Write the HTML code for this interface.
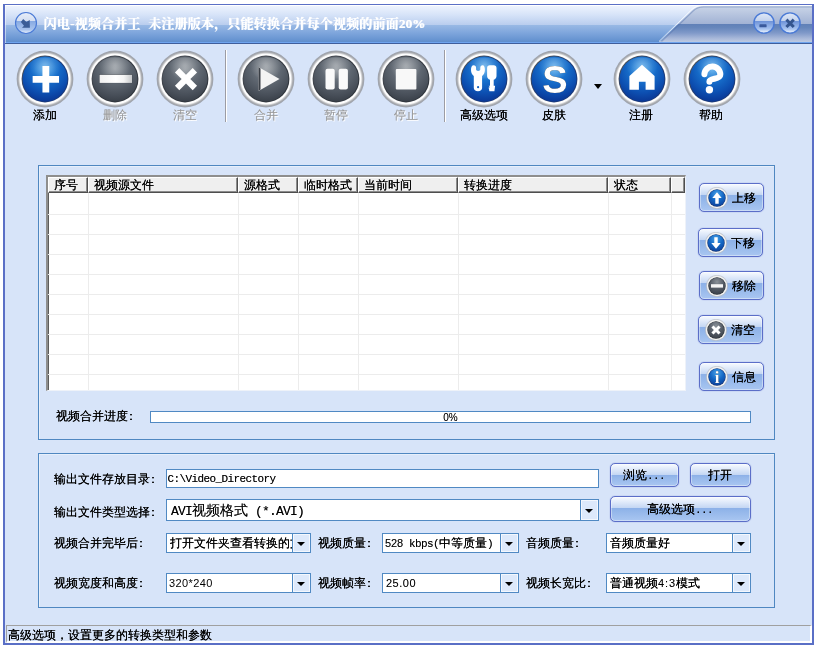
<!DOCTYPE html><html lang="zh-CN"><head><meta charset="utf-8"><title>闪电-视频合并王</title><style>
*{box-sizing:border-box;margin:0;padding:0}
html,body{width:818px;height:648px;overflow:hidden;background:#fff}
body{position:relative;font-family:"Liberation Sans","WenQuanYi Zen Hei",sans-serif;font-size:12px;color:#000;line-height:12px;text-shadow:0 0 0 #000}
#root{position:absolute;left:0;top:0;width:818px;height:648px;will-change:transform}
.abs{position:absolute}
#win{position:absolute;left:3px;top:4px;width:811px;height:641px;background:#d7e4f9;border-style:solid;border-color:#5a6fc6;border-width:1px 2px 2px 2px}
#title{position:absolute;left:5px;top:5px;width:807px;height:39px;
 background:linear-gradient(to bottom,#ffffff 0,#ffffff 1px,#edf3fe 1px,#d6e3f8 10px,#b9cdee 20px,#99b9e5 20px,#7ea5dc 28px,#6391cf 36px,#5f8dcb 37px,#6ea4ef 37px,#6ea4ef 38px,#3b5b99 38px,#41619f 39px)}
#title .lw{position:absolute;left:0;top:0;width:1px;height:38px;background:rgba(255,255,255,.5)}
.ttext{text-shadow:0.6px 0 0 rgba(255,255,255,.85);position:absolute;left:45px;top:16px;font:bold 13px/15px "Liberation Serif","Noto Serif CJK SC",serif;color:#fff;white-space:nowrap;letter-spacing:0}
.tlabel{position:absolute;top:109px;width:80px;text-align:center;font-size:12px;line-height:12px;white-space:nowrap}
.tlabel.dis{color:#9a9a9a;text-shadow:0 0 0 rgba(154,154,154,.4),1px 1px 0 #fff}
.sep{position:absolute;top:50px;width:2px;height:72px;border-left:1px solid #9c9ca4;border-right:1px solid #fff}
.grp{position:absolute;border:1px solid #4f87c1;box-shadow:inset 1px 1px 0 rgba(255,255,255,.4)}
.cl{margin-left:-3px}
.m{font:11px/12px "Liberation Mono",monospace;letter-spacing:-0.6px;text-shadow:0 0 0 rgba(0,0,0,.55)}
.n{font:11px/12px "Liberation Sans",sans-serif;text-shadow:0 0 0 rgba(0,0,0,.35)}
.lbl{position:absolute;white-space:nowrap;font-size:12px;line-height:12px}
.inp{position:absolute;background:#fff;border:1px solid #5089c3;white-space:nowrap;overflow:hidden}
.dd{position:absolute;right:0;top:0;bottom:0;width:18px;background:#dde9fb;border-left:1px solid #5089c3;box-shadow:inset 0 0 0 1px #f4f8fe}
.dd:after{content:"";position:absolute;left:3.5px;top:50%;margin-top:-1px;border-left:4px solid transparent;border-right:4px solid transparent;border-top:4px solid #000;width:0;height:0}
.btn{position:absolute;border:1px solid #5b6ec8;border-radius:5px;
 background:linear-gradient(to bottom,#f8fbff 0,#e0eafa 5px,#c3d6f3 11px,#8db1e8 11.5px,#94b7ea 60%,#a9c6f1 100%);
 box-shadow:inset 0 0 0 1px rgba(255,255,255,.4),0 0 1px #5b6ec8}
.btn .t{position:absolute;white-space:nowrap;font-size:12px;line-height:12px}
#list{position:absolute;left:46px;top:175px;width:640px;height:216px;background:#fff;border-style:solid;border-width:2px 1px 1px 2px;border-color:#8e8e8e #eef2f9 #eef2f9 #8e8e8e;box-shadow:inset 1px 1px 0 #5c5c5c}
.hc{position:absolute;top:0;height:16px;background:#efefef;border-style:solid;border-width:1px 1px 1px 1px;border-color:#fff #4e4e4e #4e4e4e #fff;box-shadow:inset -1px -1px 0 #8c8c8c;font-size:12px;line-height:12px;padding:1px 0 0 5px;white-space:nowrap;overflow:visible}
.vl{position:absolute;top:16px;bottom:0;width:1px;background:#ececec}
.hl{position:absolute;left:0;right:0;height:1px;background:#ececec}
#status{position:absolute;left:6px;top:625px;width:806px;height:18px;border-style:solid;border-width:1px 2px 2px 1px;border-color:#a0a0a0 #fff #fff #a0a0a0;font-size:12px;line-height:12px;padding:3px 0 0 1px;white-space:nowrap}
</style></head><body><div id="root">
<div id="win"></div>
<div id="title"><div class="lw"></div>
<svg class="abs" style="left:650px;top:0" width="157" height="39" viewBox="0 0 157 39"><defs><linearGradient id="tg" x1="0" y1="1" x2="0" y2="37" gradientUnits="userSpaceOnUse"><stop offset="0" stop-color="#cad5e8"/><stop offset="0.499" stop-color="#a1b2d4"/><stop offset="0.5" stop-color="#6080b7"/><stop offset="0.6" stop-color="#6686bb"/><stop offset="0.75" stop-color="#8099c9"/><stop offset="0.9" stop-color="#a8b8d9"/><stop offset="1" stop-color="#bdcae2"/></linearGradient></defs><path d="M4,37 L6.500,35.500 L37,5.500 C40.500,2.200 43.500,1 48.500,1 L157,1 L157,37Z" fill="url(#tg)"/><path d="M6.500,36.500 L37.800,6.300 C41,3.200 43.500,2 48.500,2 L157,2" fill="none" stroke="#4f6ea9" stroke-opacity="0.42" stroke-width="1.1"/><path d="M4,36.500 L36.400,4.900 C40,1.500 43,0.500 48.500,0.500 L157,0.500" fill="none" stroke="#ffffff" stroke-opacity="0.8" stroke-width="0.9"/></svg>
<svg class="abs" style="left:8.050px;top:4.800px" width="26" height="26" viewBox="-13 -13 26 26"><defs><linearGradient id="ti" x1="0" y1="-11" x2="0" y2="11" gradientUnits="userSpaceOnUse"><stop offset="0" stop-color="#e9eff9"/><stop offset="0.39" stop-color="#d5dff2"/><stop offset="0.41" stop-color="#86a9e2"/><stop offset="0.8" stop-color="#a9c4ee"/><stop offset="1" stop-color="#f4f8fe"/></linearGradient></defs><circle r="10.500" fill="url(#ti)" stroke="#4a7ad6" stroke-width="1.15"/><path d="M-5.100,-1 L-2.800,-3.900 L0.400,-1 L3.700,-2.900 L3.900,4.700 L-4,4.700 L-2,2.700Z" fill="#3b5d97"/></svg>
<div class="ttext abs" style="left:38.500px;top:11px;word-spacing:4px;letter-spacing:0.2px">闪电-视频合并王 未注册版本，只能转换合并每个视频的前面20%</div>
<svg class="abs" style="left:746px;top:4.700px" width="26" height="26" viewBox="-13 -13 26 26"><defs><linearGradient id="c759" x1="0" y1="-10" x2="0" y2="10" gradientUnits="userSpaceOnUse"><stop offset="0" stop-color="#dfe8f7"/><stop offset="0.40" stop-color="#c3d2ed"/><stop offset="0.42" stop-color="#6f94d9"/><stop offset="0.8" stop-color="#a6c2ef"/><stop offset="1" stop-color="#f4f8fe"/></linearGradient></defs><circle r="10.1" fill="url(#c759)" stroke="#4a7ad6" stroke-width="1.4"/><rect x="-4.6" y="1.3" width="7.2" height="3" rx="0.6" fill="#3a5a9c"/></svg>
<svg class="abs" style="left:772.1px;top:4.700px" width="26" height="26" viewBox="-13 -13 26 26"><defs><linearGradient id="c785" x1="0" y1="-10" x2="0" y2="10" gradientUnits="userSpaceOnUse"><stop offset="0" stop-color="#dfe8f7"/><stop offset="0.40" stop-color="#c3d2ed"/><stop offset="0.42" stop-color="#6f94d9"/><stop offset="0.8" stop-color="#a6c2ef"/><stop offset="1" stop-color="#f4f8fe"/></linearGradient></defs><circle r="10.1" fill="url(#c785)" stroke="#4a7ad6" stroke-width="1.4"/><path d="M-1.5,-5.2 h3 v3.7 h3.7 v3 h-3.7 v3.7 h-3 v-3.7 h-3.7 v-3 h3.700z" fill="#34558f" transform="translate(0.1,0.3) rotate(45)"/></svg>
</div>
<svg class="abs" style="left:15.3px;top:49px" width="60" height="60" viewBox="-30 -30 60 60"><defs><radialGradient id="g45" cx="0" cy="-10" r="38" gradientUnits="userSpaceOnUse"><stop offset="0" stop-color="#48a4ea"/><stop offset="0.3" stop-color="#1872ce"/><stop offset="0.62" stop-color="#0d50b2"/><stop offset="0.85" stop-color="#0a3896"/><stop offset="1" stop-color="#08287c"/></radialGradient><radialGradient id="g45r" cx="0" cy="0" r="28.5" gradientUnits="userSpaceOnUse"><stop offset="0.78" stop-color="#f8f8f8"/><stop offset="0.87" stop-color="#ffffff"/><stop offset="0.94" stop-color="#aaacb0"/><stop offset="1" stop-color="#7c7e84" stop-opacity="0.6"/></radialGradient><radialGradient id="g45h" cx="0" cy="-14" r="16" gradientUnits="userSpaceOnUse"><stop offset="0" stop-color="#fff" stop-opacity="0.30"/><stop offset="1" stop-color="#fff" stop-opacity="0"/></radialGradient><linearGradient id="g45e" x1="-16" y1="-16" x2="16" y2="16" gradientUnits="userSpaceOnUse"><stop offset="0" stop-color="#4a4e56"/><stop offset="0.5" stop-color="#1c3a78"/><stop offset="1" stop-color="#1c3a78"/></linearGradient></defs><circle r="28.4" fill="url(#g45r)"/><circle r="23.4" fill="url(#g45e)"/><circle r="22.4" fill="url(#g45)"/><ellipse cx="0" cy="-11" rx="17" ry="10.500" fill="url(#g45h)"/><path d="M-3.4,-13.2 h6.8 v9.8 h9.8 v6.8 h-9.8 v9.8 h-6.8 v-9.8 h-9.8 v-6.8 h9.800z" fill="#fff" transform="translate(0.85,0.3)"/></svg>
<div class="tlabel" style="left:5px">添加</div>
<svg class="abs" style="left:85.2px;top:49px" width="60" height="60" viewBox="-30 -30 60 60"><defs><radialGradient id="g115" cx="0" cy="-10" r="38" gradientUnits="userSpaceOnUse"><stop offset="0" stop-color="#8a9198"/><stop offset="0.35" stop-color="#626a74"/><stop offset="0.7" stop-color="#474e58"/><stop offset="1" stop-color="#2e343c"/></radialGradient><radialGradient id="g115r" cx="0" cy="0" r="28.5" gradientUnits="userSpaceOnUse"><stop offset="0.78" stop-color="#f8f8f8"/><stop offset="0.87" stop-color="#ffffff"/><stop offset="0.94" stop-color="#aaacb0"/><stop offset="1" stop-color="#7c7e84" stop-opacity="0.6"/></radialGradient><radialGradient id="g115h" cx="0" cy="-14" r="16" gradientUnits="userSpaceOnUse"><stop offset="0" stop-color="#fff" stop-opacity="0.30"/><stop offset="1" stop-color="#fff" stop-opacity="0"/></radialGradient><linearGradient id="g115e" x1="-16" y1="-16" x2="16" y2="16" gradientUnits="userSpaceOnUse"><stop offset="0" stop-color="#4a4e56"/><stop offset="0.5" stop-color="#30353c"/><stop offset="1" stop-color="#30353c"/></linearGradient></defs><circle r="28.4" fill="url(#g115r)"/><circle r="23.4" fill="url(#g115e)"/><circle r="22.4" fill="url(#g115)"/><ellipse cx="0" cy="-11" rx="17" ry="10.500" fill="url(#g115h)"/><defs><linearGradient id="mg" x1="0" x2="1"><stop offset="0" stop-color="#f0f0f0"/><stop offset="0.5" stop-color="#ffffff"/><stop offset="0.75" stop-color="#f4f4f4"/><stop offset="1" stop-color="#c6c8ca"/></linearGradient></defs><rect x="-15.8" y="-4.9" width="33" height="9" fill="#2c3138" fill-opacity="0.55"/><rect x="-15.4" y="-4.2" width="32.4" height="8.1" fill="url(#mg)"/></svg>
<div class="tlabel dis" style="left:75px">删除</div>
<svg class="abs" style="left:155.2px;top:49px" width="60" height="60" viewBox="-30 -30 60 60"><defs><radialGradient id="g185" cx="0" cy="-10" r="38" gradientUnits="userSpaceOnUse"><stop offset="0" stop-color="#8a9198"/><stop offset="0.35" stop-color="#626a74"/><stop offset="0.7" stop-color="#474e58"/><stop offset="1" stop-color="#2e343c"/></radialGradient><radialGradient id="g185r" cx="0" cy="0" r="28.5" gradientUnits="userSpaceOnUse"><stop offset="0.78" stop-color="#f8f8f8"/><stop offset="0.87" stop-color="#ffffff"/><stop offset="0.94" stop-color="#aaacb0"/><stop offset="1" stop-color="#7c7e84" stop-opacity="0.6"/></radialGradient><radialGradient id="g185h" cx="0" cy="-14" r="16" gradientUnits="userSpaceOnUse"><stop offset="0" stop-color="#fff" stop-opacity="0.30"/><stop offset="1" stop-color="#fff" stop-opacity="0"/></radialGradient><linearGradient id="g185e" x1="-16" y1="-16" x2="16" y2="16" gradientUnits="userSpaceOnUse"><stop offset="0" stop-color="#4a4e56"/><stop offset="0.5" stop-color="#30353c"/><stop offset="1" stop-color="#30353c"/></linearGradient></defs><circle r="28.4" fill="url(#g185r)"/><circle r="23.4" fill="url(#g185e)"/><circle r="22.4" fill="url(#g185)"/><ellipse cx="0" cy="-11" rx="17" ry="10.500" fill="url(#g185h)"/><path d="M-3.3,-13.500 h6.6 v10.200 h10.200 v6.600 h-10.200 v10.200 h-6.600 v-10.200 h-10.200 v-6.600 h10.200z" fill="#fff" transform="translate(1,0.1) rotate(45) scale(0.93)"/></svg>
<div class="tlabel dis" style="left:145px">清空</div>
<svg class="abs" style="left:236.2px;top:49px" width="60" height="60" viewBox="-30 -30 60 60"><defs><radialGradient id="g266" cx="0" cy="-10" r="38" gradientUnits="userSpaceOnUse"><stop offset="0" stop-color="#8a9198"/><stop offset="0.35" stop-color="#626a74"/><stop offset="0.7" stop-color="#474e58"/><stop offset="1" stop-color="#2e343c"/></radialGradient><radialGradient id="g266r" cx="0" cy="0" r="28.5" gradientUnits="userSpaceOnUse"><stop offset="0.78" stop-color="#f8f8f8"/><stop offset="0.87" stop-color="#ffffff"/><stop offset="0.94" stop-color="#aaacb0"/><stop offset="1" stop-color="#7c7e84" stop-opacity="0.6"/></radialGradient><radialGradient id="g266h" cx="0" cy="-14" r="16" gradientUnits="userSpaceOnUse"><stop offset="0" stop-color="#fff" stop-opacity="0.30"/><stop offset="1" stop-color="#fff" stop-opacity="0"/></radialGradient><linearGradient id="g266e" x1="-16" y1="-16" x2="16" y2="16" gradientUnits="userSpaceOnUse"><stop offset="0" stop-color="#4a4e56"/><stop offset="0.5" stop-color="#30353c"/><stop offset="1" stop-color="#30353c"/></linearGradient></defs><circle r="28.4" fill="url(#g266r)"/><circle r="23.4" fill="url(#g266e)"/><circle r="22.4" fill="url(#g266)"/><ellipse cx="0" cy="-11" rx="17" ry="10.500" fill="url(#g266h)"/><path d="M-7.5,-12 L13.5,0 L-7.5,12Z" fill="#f4f4f4"/><path d="M-7.5,-12 L-5.5,-10.5 L-5.5,10.5 L-7.5,12Z" fill="#3a3f46"/></svg>
<div class="tlabel dis" style="left:226px">合并</div>
<svg class="abs" style="left:306.1px;top:49px" width="60" height="60" viewBox="-30 -30 60 60"><defs><radialGradient id="g336" cx="0" cy="-10" r="38" gradientUnits="userSpaceOnUse"><stop offset="0" stop-color="#8a9198"/><stop offset="0.35" stop-color="#626a74"/><stop offset="0.7" stop-color="#474e58"/><stop offset="1" stop-color="#2e343c"/></radialGradient><radialGradient id="g336r" cx="0" cy="0" r="28.5" gradientUnits="userSpaceOnUse"><stop offset="0.78" stop-color="#f8f8f8"/><stop offset="0.87" stop-color="#ffffff"/><stop offset="0.94" stop-color="#aaacb0"/><stop offset="1" stop-color="#7c7e84" stop-opacity="0.6"/></radialGradient><radialGradient id="g336h" cx="0" cy="-14" r="16" gradientUnits="userSpaceOnUse"><stop offset="0" stop-color="#fff" stop-opacity="0.30"/><stop offset="1" stop-color="#fff" stop-opacity="0"/></radialGradient><linearGradient id="g336e" x1="-16" y1="-16" x2="16" y2="16" gradientUnits="userSpaceOnUse"><stop offset="0" stop-color="#4a4e56"/><stop offset="0.5" stop-color="#30353c"/><stop offset="1" stop-color="#30353c"/></linearGradient></defs><circle r="28.4" fill="url(#g336r)"/><circle r="23.4" fill="url(#g336e)"/><circle r="22.4" fill="url(#g336)"/><ellipse cx="0" cy="-11" rx="17" ry="10.500" fill="url(#g336h)"/><rect x="-10.5" y="-10.3" width="9.2" height="20.8" rx="2" fill="#fafafa"/><rect x="2.7" y="-10.3" width="9.2" height="20.8" rx="2" fill="#fafafa"/></svg>
<div class="tlabel dis" style="left:296px">暂停</div>
<svg class="abs" style="left:376.2px;top:49px" width="60" height="60" viewBox="-30 -30 60 60"><defs><radialGradient id="g406" cx="0" cy="-10" r="38" gradientUnits="userSpaceOnUse"><stop offset="0" stop-color="#8a9198"/><stop offset="0.35" stop-color="#626a74"/><stop offset="0.7" stop-color="#474e58"/><stop offset="1" stop-color="#2e343c"/></radialGradient><radialGradient id="g406r" cx="0" cy="0" r="28.5" gradientUnits="userSpaceOnUse"><stop offset="0.78" stop-color="#f8f8f8"/><stop offset="0.87" stop-color="#ffffff"/><stop offset="0.94" stop-color="#aaacb0"/><stop offset="1" stop-color="#7c7e84" stop-opacity="0.6"/></radialGradient><radialGradient id="g406h" cx="0" cy="-14" r="16" gradientUnits="userSpaceOnUse"><stop offset="0" stop-color="#fff" stop-opacity="0.30"/><stop offset="1" stop-color="#fff" stop-opacity="0"/></radialGradient><linearGradient id="g406e" x1="-16" y1="-16" x2="16" y2="16" gradientUnits="userSpaceOnUse"><stop offset="0" stop-color="#4a4e56"/><stop offset="0.5" stop-color="#30353c"/><stop offset="1" stop-color="#30353c"/></linearGradient></defs><circle r="28.4" fill="url(#g406r)"/><circle r="23.4" fill="url(#g406e)"/><circle r="22.4" fill="url(#g406)"/><ellipse cx="0" cy="-11" rx="17" ry="10.500" fill="url(#g406h)"/><rect x="-10.2" y="-10" width="20.6" height="20.6" rx="1" fill="#f8f8f8"/></svg>
<div class="tlabel dis" style="left:366px">停止</div>
<svg class="abs" style="left:454.3px;top:49px" width="60" height="60" viewBox="-30 -30 60 60"><defs><radialGradient id="g484" cx="0" cy="-10" r="38" gradientUnits="userSpaceOnUse"><stop offset="0" stop-color="#48a4ea"/><stop offset="0.3" stop-color="#1872ce"/><stop offset="0.62" stop-color="#0d50b2"/><stop offset="0.85" stop-color="#0a3896"/><stop offset="1" stop-color="#08287c"/></radialGradient><radialGradient id="g484r" cx="0" cy="0" r="28.5" gradientUnits="userSpaceOnUse"><stop offset="0.78" stop-color="#f8f8f8"/><stop offset="0.87" stop-color="#ffffff"/><stop offset="0.94" stop-color="#aaacb0"/><stop offset="1" stop-color="#7c7e84" stop-opacity="0.6"/></radialGradient><radialGradient id="g484h" cx="0" cy="-14" r="16" gradientUnits="userSpaceOnUse"><stop offset="0" stop-color="#fff" stop-opacity="0.30"/><stop offset="1" stop-color="#fff" stop-opacity="0"/></radialGradient><linearGradient id="g484e" x1="-16" y1="-16" x2="16" y2="16" gradientUnits="userSpaceOnUse"><stop offset="0" stop-color="#4a4e56"/><stop offset="0.5" stop-color="#1c3a78"/><stop offset="1" stop-color="#1c3a78"/></linearGradient></defs><circle r="28.4" fill="url(#g484r)"/><circle r="23.4" fill="url(#g484e)"/><circle r="22.4" fill="url(#g484)"/><ellipse cx="0" cy="-11" rx="17" ry="10.500" fill="url(#g484h)"/><g fill="#fff"><path d="M-13,-9 C-13,-12 -12,-13.700 -10.400,-13.700 C-8.800,-13.700 -7.900,-12.600 -7.900,-11 L-7.900,-9.800 C-7.900,-8.600 -7,-8.100 -5.800,-8.100 C-4.600,-8.100 -3.700,-8.600 -3.700,-9.800 L-3.700,-11 C-3.700,-12.600 -2.800,-13.700 -1.400,-13.700 C0.200,-13.700 0.900,-12 0.900,-9 C0.900,-6 -0.500,-4.200 -1.900,-3 L-1.900,9 C-1.900,11 -3.600,12.200 -6,12.200 C-8.500,12.200 -10.200,11 -10.200,9 L-10.200,-3 C-11.600,-4.200 -13,-6 -13,-9 Z"/><path d="M3.100,-11 C3.100,-12.800 4.200,-13.700 5.800,-13.700 L9.800,-13.700 C11.400,-13.700 12.500,-12.800 12.500,-11 L12.500,-3 C12.500,-1 11.500,0 9.700,0.800 L9.700,6.700 L11.100,6.700 L10.400,12.200 L5.400,12.200 L4.600,8.600 L6,8.200 L4.600,6.700 L6,6.700 L6,0.800 C4.100,0 3.100,-1 3.100,-3 Z"/></g><circle cx="-5.900" cy="8.200" r="1.100" fill="#1560bd"/></svg>
<div class="tlabel" style="left:444px">高级选项</div>
<svg class="abs" style="left:524.2px;top:49px" width="60" height="60" viewBox="-30 -30 60 60"><defs><radialGradient id="g554" cx="0" cy="-10" r="38" gradientUnits="userSpaceOnUse"><stop offset="0" stop-color="#48a4ea"/><stop offset="0.3" stop-color="#1872ce"/><stop offset="0.62" stop-color="#0d50b2"/><stop offset="0.85" stop-color="#0a3896"/><stop offset="1" stop-color="#08287c"/></radialGradient><radialGradient id="g554r" cx="0" cy="0" r="28.5" gradientUnits="userSpaceOnUse"><stop offset="0.78" stop-color="#f8f8f8"/><stop offset="0.87" stop-color="#ffffff"/><stop offset="0.94" stop-color="#aaacb0"/><stop offset="1" stop-color="#7c7e84" stop-opacity="0.6"/></radialGradient><radialGradient id="g554h" cx="0" cy="-14" r="16" gradientUnits="userSpaceOnUse"><stop offset="0" stop-color="#fff" stop-opacity="0.30"/><stop offset="1" stop-color="#fff" stop-opacity="0"/></radialGradient><linearGradient id="g554e" x1="-16" y1="-16" x2="16" y2="16" gradientUnits="userSpaceOnUse"><stop offset="0" stop-color="#4a4e56"/><stop offset="0.5" stop-color="#1c3a78"/><stop offset="1" stop-color="#1c3a78"/></linearGradient></defs><circle r="28.4" fill="url(#g554r)"/><circle r="23.4" fill="url(#g554e)"/><circle r="22.4" fill="url(#g554)"/><ellipse cx="0" cy="-11" rx="17" ry="10.500" fill="url(#g554h)"/><text x="0.9" y="14.400" text-anchor="middle" font-family="Liberation Sans,sans-serif" font-weight="bold" font-size="38" fill="#fff">S</text></svg>
<div class="tlabel" style="left:514px">皮肤</div>
<svg class="abs" style="left:611.5px;top:49px" width="60" height="60" viewBox="-30 -30 60 60"><defs><radialGradient id="g641" cx="0" cy="-10" r="38" gradientUnits="userSpaceOnUse"><stop offset="0" stop-color="#48a4ea"/><stop offset="0.3" stop-color="#1872ce"/><stop offset="0.62" stop-color="#0d50b2"/><stop offset="0.85" stop-color="#0a3896"/><stop offset="1" stop-color="#08287c"/></radialGradient><radialGradient id="g641r" cx="0" cy="0" r="28.5" gradientUnits="userSpaceOnUse"><stop offset="0.78" stop-color="#f8f8f8"/><stop offset="0.87" stop-color="#ffffff"/><stop offset="0.94" stop-color="#aaacb0"/><stop offset="1" stop-color="#7c7e84" stop-opacity="0.6"/></radialGradient><radialGradient id="g641h" cx="0" cy="-14" r="16" gradientUnits="userSpaceOnUse"><stop offset="0" stop-color="#fff" stop-opacity="0.30"/><stop offset="1" stop-color="#fff" stop-opacity="0"/></radialGradient><linearGradient id="g641e" x1="-16" y1="-16" x2="16" y2="16" gradientUnits="userSpaceOnUse"><stop offset="0" stop-color="#4a4e56"/><stop offset="0.5" stop-color="#1c3a78"/><stop offset="1" stop-color="#1c3a78"/></linearGradient></defs><circle r="28.4" fill="url(#g641r)"/><circle r="23.4" fill="url(#g641e)"/><circle r="22.4" fill="url(#g641)"/><ellipse cx="0" cy="-11" rx="17" ry="10.500" fill="url(#g641h)"/><path d="M0,-14.200 L12.600,-3.100 L12.600,10.800 L3.600,10.800 L3.600,2.700 L-3.100,2.700 L-3.100,10.800 L-12.600,10.800 L-12.600,-3.100 Z" fill="#fff"/></svg>
<div class="tlabel" style="left:601px">注册</div>
<svg class="abs" style="left:681.5px;top:49px" width="60" height="60" viewBox="-30 -30 60 60"><defs><radialGradient id="g711" cx="0" cy="-10" r="38" gradientUnits="userSpaceOnUse"><stop offset="0" stop-color="#48a4ea"/><stop offset="0.3" stop-color="#1872ce"/><stop offset="0.62" stop-color="#0d50b2"/><stop offset="0.85" stop-color="#0a3896"/><stop offset="1" stop-color="#08287c"/></radialGradient><radialGradient id="g711r" cx="0" cy="0" r="28.5" gradientUnits="userSpaceOnUse"><stop offset="0.78" stop-color="#f8f8f8"/><stop offset="0.87" stop-color="#ffffff"/><stop offset="0.94" stop-color="#aaacb0"/><stop offset="1" stop-color="#7c7e84" stop-opacity="0.6"/></radialGradient><radialGradient id="g711h" cx="0" cy="-14" r="16" gradientUnits="userSpaceOnUse"><stop offset="0" stop-color="#fff" stop-opacity="0.30"/><stop offset="1" stop-color="#fff" stop-opacity="0"/></radialGradient><linearGradient id="g711e" x1="-16" y1="-16" x2="16" y2="16" gradientUnits="userSpaceOnUse"><stop offset="0" stop-color="#4a4e56"/><stop offset="0.5" stop-color="#1c3a78"/><stop offset="1" stop-color="#1c3a78"/></linearGradient></defs><circle r="28.4" fill="url(#g711r)"/><circle r="23.4" fill="url(#g711e)"/><circle r="22.4" fill="url(#g711)"/><ellipse cx="0" cy="-11" rx="17" ry="10.500" fill="url(#g711h)"/><path d="M-7.600,-4.800 A7.950,7.950 0 0 1 8.300,-4.150 C8.300,1.200 -2.600,-1.600 -2.600,2.700" fill="none" stroke="#fff" stroke-width="6" stroke-linecap="round"/><circle cx="-2.600" cy="10.800" r="3.700" fill="#fff"/></svg>
<div class="tlabel" style="left:671px">帮助</div>
<div class="sep" style="left:225px"></div><div class="sep" style="left:444px"></div>
<div class="abs" style="left:593.8px;top:83.5px;width:0;height:0;border-left:4.5px solid transparent;border-right:4.5px solid transparent;border-top:5px solid #000"></div>
<div class="grp" style="left:38px;top:165px;width:737px;height:275px"></div>
<div id="list">
<div class="hc" style="left:0px;width:40px">序号</div>
<div class="hc" style="left:40px;width:150px">视频源文件</div>
<div class="hc" style="left:190px;width:60px">源格式</div>
<div class="hc" style="left:250px;width:60px">临时格式</div>
<div class="hc" style="left:310px;width:100px">当前时间</div>
<div class="hc" style="left:410px;width:150px">转换进度</div>
<div class="hc" style="left:560px;width:63px">状态</div>
<div class="hc" style="left:623px;width:14px"></div>
<div class="vl" style="left:40px"></div>
<div class="vl" style="left:190px"></div>
<div class="vl" style="left:250px"></div>
<div class="vl" style="left:310px"></div>
<div class="vl" style="left:410px"></div>
<div class="vl" style="left:560px"></div>
<div class="vl" style="left:623px"></div>
<div class="hl" style="top:37px"></div>
<div class="hl" style="top:57px"></div>
<div class="hl" style="top:77px"></div>
<div class="hl" style="top:97px"></div>
<div class="hl" style="top:117px"></div>
<div class="hl" style="top:137px"></div>
<div class="hl" style="top:157px"></div>
<div class="hl" style="top:177px"></div>
<div class="hl" style="top:197px"></div>
</div>
<div class="btn" style="left:699px;top:183px;width:65px;height:29px"><div class="t" style="left:32px;top:8px">上移</div></div>
<svg class="abs" style="left:705.2px;top:186.2px" width="24" height="24" viewBox="-12 -12 24 24"><defs><radialGradient id="s198" cx="0" cy="-4" r="15" gradientUnits="userSpaceOnUse"><stop offset="0" stop-color="#48a2e8"/><stop offset="0.45" stop-color="#1467c4"/><stop offset="1" stop-color="#0a3088"/></radialGradient></defs><circle r="11" fill="#b9bcc2" fill-opacity="0.75"/><circle r="10.2" fill="#f4f4f2"/><circle r="8.7" fill="#1c3a78"/><circle r="8.2" fill="url(#s198)"/><path d="M0,-5.800 L4.700,0 L1.700,0 L1.700,5.800 L-1.700,5.800 L-1.700,0 L-4.700,0Z" fill="#fff"/></svg>
<div class="btn" style="left:698px;top:228px;width:65px;height:29px"><div class="t" style="left:32px;top:8px">下移</div></div>
<svg class="abs" style="left:704.2px;top:231.2px" width="24" height="24" viewBox="-12 -12 24 24"><defs><radialGradient id="s243" cx="0" cy="-4" r="15" gradientUnits="userSpaceOnUse"><stop offset="0" stop-color="#48a2e8"/><stop offset="0.45" stop-color="#1467c4"/><stop offset="1" stop-color="#0a3088"/></radialGradient></defs><circle r="11" fill="#b9bcc2" fill-opacity="0.75"/><circle r="10.2" fill="#f4f4f2"/><circle r="8.7" fill="#1c3a78"/><circle r="8.2" fill="url(#s243)"/><path d="M0,5.800 L4.700,0 L1.700,0 L1.700,-5.800 L-1.700,-5.800 L-1.700,0 L-4.700,0Z" fill="#fff"/></svg>
<div class="btn" style="left:699px;top:271px;width:65px;height:29px"><div class="t" style="left:32px;top:8px">移除</div></div>
<svg class="abs" style="left:705.2px;top:274.2px" width="24" height="24" viewBox="-12 -12 24 24"><defs><radialGradient id="s286" cx="0" cy="-4" r="15" gradientUnits="userSpaceOnUse"><stop offset="0" stop-color="#8a9198"/><stop offset="0.45" stop-color="#555c66"/><stop offset="1" stop-color="#2e343c"/></radialGradient></defs><circle r="11" fill="#b9bcc2" fill-opacity="0.75"/><circle r="10.2" fill="#f4f4f2"/><circle r="8.7" fill="#30353c"/><circle r="8.2" fill="url(#s286)"/><rect x="-6" y="-1.8" width="12" height="3.4" fill="#f4f4f4"/></svg>
<div class="btn" style="left:698px;top:315px;width:65px;height:29px"><div class="t" style="left:32px;top:8px">清空</div></div>
<svg class="abs" style="left:704.2px;top:318.2px" width="24" height="24" viewBox="-12 -12 24 24"><defs><radialGradient id="s330" cx="0" cy="-4" r="15" gradientUnits="userSpaceOnUse"><stop offset="0" stop-color="#8a9198"/><stop offset="0.45" stop-color="#555c66"/><stop offset="1" stop-color="#2e343c"/></radialGradient></defs><circle r="11" fill="#b9bcc2" fill-opacity="0.75"/><circle r="10.2" fill="#f4f4f2"/><circle r="8.7" fill="#30353c"/><circle r="8.2" fill="url(#s330)"/><path d="M-1.5,-5 h3 v3.5 h3.5 v3 h-3.5 v3.5 h-3 v-3.5 h-3.5 v-3 h3.5z" fill="#fff" transform="rotate(45)"/></svg>
<div class="btn" style="left:699px;top:362px;width:65px;height:29px"><div class="t" style="left:32px;top:8px">信息</div></div>
<svg class="abs" style="left:705.2px;top:365.2px" width="24" height="24" viewBox="-12 -12 24 24"><defs><radialGradient id="s377" cx="0" cy="-4" r="15" gradientUnits="userSpaceOnUse"><stop offset="0" stop-color="#48a2e8"/><stop offset="0.45" stop-color="#1467c4"/><stop offset="1" stop-color="#0a3088"/></radialGradient></defs><circle r="11" fill="#b9bcc2" fill-opacity="0.75"/><circle r="10.2" fill="#f4f4f2"/><circle r="8.7" fill="#1c3a78"/><circle r="8.2" fill="url(#s377)"/><text x="0" y="6" text-anchor="middle" font-family="Liberation Serif,serif" font-weight="bold" font-size="17" fill="#fff">i</text></svg>
<div class="lbl" style="left:56px;top:410px">视频合并进度<span class="cl">：</span></div>
<div class="inp" style="left:150px;top:411px;width:601px;height:12px"><div class="abs" style="left:0;right:0;top:-1px;text-align:center" ><span class="n" style="font-size:10px">0%</span></div></div>
<div class="grp" style="left:38px;top:453px;width:737px;height:155px"></div>
<div class="lbl" style="left:54px;top:473px">输出文件存放目录<span class="cl">：</span></div>
<div class="inp" style="left:166px;top:469px;width:433px;height:19px"><span class="abs m" style="left:0.500px;top:3px">C:\Video_Directory</span></div>
<div class="lbl" style="left:54px;top:506px">输出文件类型选择<span class="cl">：</span></div>
<div class="inp" style="left:166px;top:499px;width:433px;height:22px"><span class="abs" style="left:4px;top:3px;font-size:14px;line-height:15px;text-shadow:0 0 0 rgba(0,0,0,.5)"><span class="m" style="font-size:13px;letter-spacing:-0.8px;line-height:15px">AVI</span>视频格式<span class="m" style="font-size:13px;letter-spacing:-0.8px;line-height:15px"> (*.AVI)</span></span><div class="dd"></div></div>
<div class="btn" style="left:610px;top:463px;width:69px;height:24px"><div class="t" style="left:12px;top:5px">浏览<span class="m">...</span></div></div>
<div class="btn" style="left:690px;top:463px;width:61px;height:24px"><div class="t" style="left:17px;top:5px">打开</div></div>
<div class="btn" style="left:610px;top:496px;width:141px;height:26px"><div class="t" style="left:36px;top:6px">高级选项<span class="m">...</span></div></div>
<div class="lbl" style="left:54px;top:537px">视频合并完毕后<span class="cl">：</span></div>
<div class="inp" style="left:166px;top:533px;width:145px;height:20px"><span class="abs" style="left:3px;top:3px">打开文件夹查看转换的文件</span><div class="dd"></div></div>
<div class="lbl" style="left:318px;top:537px">视频质量<span class="cl">：</span></div>
<div class="inp" style="left:382px;top:533px;width:137px;height:20px"><span class="abs" style="left:2px;top:3px"><span class="n" style="letter-spacing:-0.1px">528</span><span class="m"> kbps(</span>中等质量<span class="m">)</span></span><div class="dd"></div></div>
<div class="lbl" style="left:526px;top:537px">音频质量<span class="cl">：</span></div>
<div class="inp" style="left:606px;top:533px;width:145px;height:20px"><span class="abs" style="left:3px;top:3px">音频质量好</span><div class="dd"></div></div>
<div class="lbl" style="left:54px;top:577px">视频宽度和高度<span class="cl">：</span></div>
<div class="inp" style="left:166px;top:573px;width:145px;height:20px"><span class="abs" style="left:2px;top:3px;font-size:11px;letter-spacing:0.4px;text-shadow:none">320*240</span><div class="dd"></div></div>
<div class="lbl" style="left:318px;top:577px">视频帧率<span class="cl">：</span></div>
<div class="inp" style="left:382px;top:573px;width:137px;height:20px"><span class="abs n" style="left:3px;top:3px;letter-spacing:0.5px">25.00</span><div class="dd"></div></div>
<div class="lbl" style="left:526px;top:577px">视频长宽比<span class="cl">：</span></div>
<div class="inp" style="left:606px;top:573px;width:145px;height:20px"><span class="abs" style="left:3px;top:3px">普通视频<span class="n" style="letter-spacing:0.9px">4:3</span>模式</span><div class="dd"></div></div>
<div id="status">高级选项，设置更多的转换类型和参数</div>
</div></body></html>
